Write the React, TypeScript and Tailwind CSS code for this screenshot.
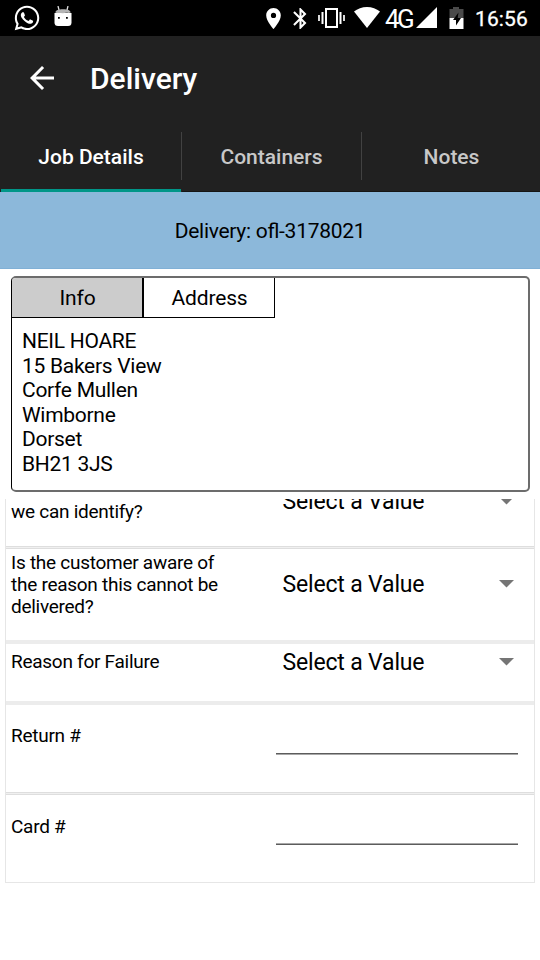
import { FaWhatsapp } from "react-icons/fa";
import { MdArrowBack, MdBluetooth, MdLocationOn } from "react-icons/md";

const tabs = ["Job Details", "Containers", "Notes"];

const address = ["NEIL HOARE", "15 Bakers View", "Corfe Mullen", "Wimborne", "Dorset", "BH21 3JS"];

function StatusBar() {
  return (
    <div className="flex h-9 shrink-0 items-start bg-black text-white">
      <FaWhatsapp className="ml-[13px] mt-1 h-7 w-7" />
      <svg className="ml-[13px] mt-[6px] h-[21px] w-[18px]" viewBox="0 0 18 21">
        <path d="M4 0 5 4M14 0 13 4" stroke="#ddd" strokeWidth="1.3" />
        <path d="M0.5 7h17v9.500a3.500 3.500 0 0 1-3.500 3.500H4a3.500 3.500 0 0 1-3.500-3.500z" fill="#fff" />
        <path d="M1.300 6.500C2 4 4.500 3.300 9 3.300s7 .7 7.700 3.200c-2 .8-3.200.2-4.700.3L9 7.300 6 7c-2 .2-3 .2-4.700-.5z" fill="#b5b5b5" />
        <path d="M4 11h1.800v1.800H4zM12 11h1.800v1.800H12z" fill="#000" />
      </svg>
      <MdLocationOn className="ml-[189px] mt-[6px] h-[25px] w-[25px]" />
      <MdBluetooth className="ml-[2px] mt-[6px] h-[25px] w-[25px]" />
      <svg className="ml-[5px] mt-2 h-5 w-[27px]" viewBox="0 0 27 20" fill="none" stroke="#fff">
        <path d="M8 1h11v18H8z" strokeWidth="2" />
        <path d="M4.500 4v12M22.500 4v12" strokeWidth="2" />
        <path d="M1 7v6M26 7v6" strokeWidth="1.700" />
      </svg>
      <svg className="ml-[9px] mt-[7px] h-[21px] w-[26px]" viewBox="0 0 26 21" fill="#fff">
        <path d="M0 4.500C3.500 1.800 8 0 13 0s9.500 1.800 13 4.500L13 21z" />
      </svg>
      <span className="ml-[5px] mt-[5px] w-[31px] text-[26px] leading-[28px] tracking-[-2.5px]">4G</span>
      <svg className="mt-[7px] h-[21px] w-[21px]" viewBox="0 0 21 21" fill="#fff">
        <path d="M21 0v21H0z" />
      </svg>
      <svg className="ml-[12px] mt-[7px] h-[22px] w-[15px]" viewBox="0 0 15 22">
        <path d="M4 0h6v2h4.500v9H.5V2H4z" fill="#4a4a4a" />
        <path d="M.5 11h14v11H.5z" fill="#fff" />
        <path d="M9.500 5.500 4 13h3v5.500L12 11H8.700z" fill="#000" />
      </svg>
      <span className="ml-[11px] mt-[6px] text-[21px] leading-[26px] tracking-[0.1px] [-webkit-text-stroke:0.3px_white]">16:56</span>
    </div>
  );
}

function Select({ className = "" }: { className?: string }) {
  return (
    <div className={`flex h-7 w-[232px] items-center justify-between pl-[0.5px] text-[23px] leading-7 tracking-[-0.17px] ${className}`}>
      <span>Select a Value</span>
      <svg className="-mt-[2px] h-[8px] w-[15px]" viewBox="0 0 15 8" fill="#757575">
        <path d="M0 0h15L7.500 7.500z" />
      </svg>
    </div>
  );
}

export default function App() {
  return (
    <div className="flex h-[960px] w-[540px] flex-col overflow-hidden bg-white font-['Roboto',sans-serif] text-black">
      <StatusBar />

      <header className="h-[156px] shrink-0 bg-[#212121] text-white">
        <div className="flex h-[86px] items-center">
          <MdArrowBack className="ml-[24px] -mt-[2px] h-9 w-9" />
          <h1 className="ml-[30px] text-[30px] font-medium leading-9">Delivery</h1>
        </div>
        <nav className="flex h-[70px] pl-[1px]">
          {tabs.map((tab, i) => (
            <div
              key={tab}
              className={`flex shrink-0 flex-col ${i === 0 ? "w-[181px] text-white" : "border-b border-[#151515] text-[#c8c8c8]"} ${i === 1 ? "w-[180px]" : ""} ${i === 2 ? "w-[178px] pl-[1px]" : ""}`}
            >
              <div className={`mt-[10px] flex h-12 items-center justify-center pt-[3px] text-[21px] font-medium ${i < 2 ? "border-r border-[#424242]" : ""}`}>
                {tab}
              </div>
              {i === 0 && <div className="mr-[1px] mt-[9px] h-[3px] bg-[#009688]" />}
            </div>
          ))}
        </nav>
      </header>

      <div className="flex h-[77px] shrink-0 items-center justify-center border-b border-[#80b0d6] bg-[#8cb8da] pt-[3px] text-[21px] tracking-[-0.28px] [font-feature-settings:'liga']">
        Delivery: ofl-3178021
      </div>

      <section className="ml-[11px] mt-[7px] h-[216px] w-[519px] shrink-0 overflow-hidden rounded-[5px] border-2 border-l border-[#6c6c6c] border-l-black">
        <div className="flex h-10 text-[21px] tracking-[-0.15px]">
          <div className="flex w-[132px] items-center justify-center border-b border-r-2 border-black bg-[#ccc] pl-[1px] pt-[2px]">Info</div>
          <div className="flex w-[131px] items-center justify-center border-b border-r border-black pl-[1px] pt-[2px]">Address</div>
        </div>
        <div className="ml-[10px] mt-[11px] text-[21px] leading-[24.5px] tracking-[-0.28px]">
          {address.map((line) => (
            <p key={line}>{line}</p>
          ))}
        </div>
      </section>

      <main className="ml-[5px] mt-[7px] h-[384px] w-[530px] shrink-0 overflow-hidden border-x border-b border-[#e6e6e6] text-[19px] leading-[22px] tracking-[-0.27px]">
        <div className="flex h-[48px] border-b border-[#dedede] pl-[5px]">
          <p className="mt-[2px] w-[271px]">we can identify?</p>
          <Select className="-mt-[11px]" />
        </div>
        <div className="h-px bg-[#f0f0f0]" />
        <div className="flex h-[92px] border-t border-[#dedede] pl-[5px]">
          <p className="mt-[3px] w-[271px]">
            Is the customer aware of
            <br />
            the reason this cannot be
            <br />
            delivered?
          </p>
          <Select className="mt-[22px]" />
        </div>
        <div className="flex h-[61px] border-t-[4px] border-[#ececec] pl-[5px]">
          <p className="mt-[7px] w-[271px]">Reason for Failure</p>
          <Select className="mt-[5px]" />
        </div>
        <div className="flex h-[92px] border-b border-t-[4px] border-[#ececec] border-b-[#dedede] pl-[5px]">
          <p className="mt-[20px] w-[265px]">Return #</p>
          <div className="h-[49px] w-[242px] border-b border-[#5c5c5c] shadow-[0_1px_0_#a8a8a8]" />
        </div>
        <div className="h-px bg-[#f0f0f0]" />
        <div className="flex h-[88px] border-t border-[#dedede] pl-[5px]">
          <p className="mt-[21px] w-[265px]">Card #</p>
          <div className="flex h-[50px] w-[242px] flex-col justify-end border-b border-[#5c5c5c]">
            <div className="h-px bg-[#a8a8a8]" />
          </div>
        </div>
      </main>
    </div>
  );
}
